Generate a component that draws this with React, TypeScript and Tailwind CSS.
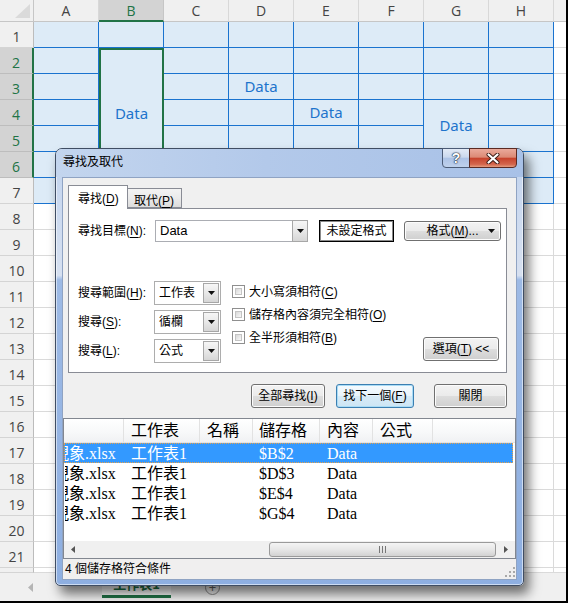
import React from "react";

const COLS = ["A", "B", "C", "D", "E", "F", "G", "H"];
const MERGED: Record<string, { span: number; text: string }> = {
  B2: { span: 5, text: "Data" },
  D3: { span: 1, text: "Data" },
  E4: { span: 1, text: "Data" },
  G4: { span: 2, text: "Data" },
};
const COVERED = new Set(["B3", "B4", "B5", "B6", "G5"]);

const ui = "font-['Liberation_Sans','Noto_Sans_CJK_TC',sans-serif]";

function U({ children }: { children: React.ReactNode }) {
  return <span className="underline underline-offset-[2px]">{children}</span>;
}

function Sheet() {
  const cells: React.ReactNode[] = [];
  cells.push(
    <div
      key="corner"
      className="flex items-end justify-end border-b border-r border-[#c6c6c6] bg-[#f0f0f0] pb-[3px] pr-[3px]"
    >
      <svg width="15" height="14" viewBox="0 0 15 14">
        <path d="M15 0V14H0Z" fill="#dadada" />
      </svg>
    </div>,
  );
  COLS.forEach((c) =>
    cells.push(
      <div
        key={c}
        className={
          c === "B"
            ? "flex items-center justify-center border-b-2 border-r border-b-[#217346] border-r-[#c6c6c6] bg-[#d3d3d3] text-[#217346]"
            : "flex items-center justify-center border-b border-r border-b-[#c6c6c6] border-r-[#d8d8d8] bg-[#f0f0f0] text-[#444]"
        }
      >
        {c}
      </div>,
    ),
  );
  cells.push(<div key="I" className="border-b border-[#c6c6c6] bg-[#f0f0f0]" />);

  for (let r = 1; r <= 22; r++) {
    const sel = r >= 2 && r <= 6;
    cells.push(
      <div
        key={`h${r}`}
        className={
          sel
            ? "flex items-center justify-center border-b border-r-2 border-b-[#bdbdbd] border-r-[#217346] bg-[#d3d3d3] pt-[3px] text-[#217346]"
            : "flex items-center justify-center border-b border-r border-b-[#d4d4d4] border-r-[#bcbcbc] bg-[#f0f0f0] pt-[3px] text-[#444]"
        }
      >
        {r <= 21 ? r : ""}
      </div>,
    );
    COLS.forEach((c) => {
      const id = `${c}${r}`;
      if (COVERED.has(id)) return;
      const m = MERGED[id];
      if (r <= 7) {
        const span = m?.span === 5 ? "row-span-5" : m?.span === 2 ? "row-span-2" : "";
        const selected = id === "B2";
        cells.push(
          <div
            key={id}
            className={`${span} flex items-center justify-center bg-[#ddebf7] font-['Noto_Sans',sans-serif] text-[15px] text-[#1d74cc] ${
              selected
                ? "border-2 border-[#217346]"
                : "border-b border-r border-[#1a73cf]"
            }`}
          >
            {m?.text}
          </div>,
        );
      } else {
        cells.push(<div key={id} className="border-b border-r border-[#dadada] bg-white" />);
      }
    });
    cells.push(<div key={`I${r}`} className="border-b border-[#dadada] bg-white" />);
  }

  return (
    <div className="grid grid-cols-[34px_repeat(8,65px)_1fr] grid-rows-[22px_repeat(21,26px)_5px] font-['Open_Sans',sans-serif] text-[14px]">
      {cells}
    </div>
  );
}

function SheetTabs() {
  return (
    <div className="flex h-[28px] items-start bg-[#f0f0f0]">
      <svg className="ml-[28px] mt-[10px]" width="5" height="9" viewBox="0 0 5 9">
        <path d="M5 0V9L0 4.5Z" fill="#b5b5b5" />
      </svg>
      <div className="ml-[69px] flex h-[25px] w-[69px] items-center justify-center border-b-[3px] border-[#217346] bg-white font-['Noto_Sans_CJK_TC',sans-serif] text-[13px] font-bold text-[#217346]">
        工作表1
      </div>
      <div className="ml-[34px] mt-[7px] flex h-[15px] w-[15px] items-center justify-center rounded-full border border-[#8a8a8a] text-[13px] leading-none text-[#666]">
        +
      </div>
    </div>
  );
}

function DropBtn({ className = "" }: { className?: string }) {
  return (
    <div
      className={`flex w-[16px] items-center justify-center border border-[#a7a7a7] bg-[linear-gradient(180deg,#f6f6f6_0%,#e8e8e8_50%,#d6d6d6_100%)] ${className}`}
    >
      <svg width="7" height="4" viewBox="0 0 7 4">
        <path d="M0 0H7L3.5 4Z" fill="#111" />
      </svg>
    </div>
  );
}

function Select({ value }: { value: string }) {
  return (
    <div className="flex h-[24px] w-[67px] border border-[#adadad] bg-white p-px">
      <span className="flex-1 pl-[3px] leading-[20px]">{value}</span>
      <DropBtn />
    </div>
  );
}

function Btn({
  children,
  className = "",
  def = false,
}: {
  children: React.ReactNode;
  className?: string;
  def?: boolean;
}) {
  return (
    <div
      className={`relative flex items-center justify-center rounded-[3px] border ${
        def
          ? "border-[#3c7fb1] bg-[linear-gradient(180deg,#f6fbfe_0%,#e9f4fb_48%,#d7ebf7_52%,#cde5f4_100%)] shadow-[inset_0_0_0_1px_#a9dcf6]"
          : "border-[#707070] bg-[linear-gradient(180deg,#f3f3f3_0%,#ebebeb_48%,#dddddd_52%,#cfcfcf_100%)] shadow-[inset_0_0_0_1px_#fcfcfc]"
      } ${className}`}
    >
      {children}
    </div>
  );
}

function Check({ children }: { children: React.ReactNode }) {
  return (
    <div className="flex h-[13px] items-center gap-[4px]">
      <div className="h-[13px] w-[13px] border border-[#8f8f8f] bg-white p-[2px]">
        <div className="h-full w-full border border-[#c4c4c4] bg-[linear-gradient(135deg,#d8d8d8,#f8f8f8)]" />
      </div>
      <span className="leading-none">{children}</span>
    </div>
  );
}

const RESULTS = ["$B$2", "$D$3", "$E$4", "$G$4"];

function ListView() {
  return (
    <div className="flex h-[141px] flex-col border border-[#828790] bg-white font-['Liberation_Serif','Noto_Sans_CJK_TC',serif] text-[16px] text-black">
      <div className="flex h-[24px] border-b border-[#e3e3e3] bg-[linear-gradient(180deg,#ffffff_0%,#f7f8f9_60%,#f0f1f3_100%)] leading-[23px]">
        <div className="w-[60px] border-r border-[#e2e2e2]" />
        <div className="w-[76px] border-r border-[#e2e2e2] pl-[7px]">工作表</div>
        <div className="w-[53px] border-r border-[#e2e2e2] pl-[7px]">名稱</div>
        <div className="w-[67px] border-r border-[#e2e2e2] pl-[6px]">儲存格</div>
        <div className="w-[53px] border-r border-[#e2e2e2] pl-[7px]">內容</div>
        <div className="w-[60px] border-r border-[#e2e2e2] pl-[7px]">公式</div>
        <div className="flex-1" />
      </div>
      {RESULTS.map((cell, i) => (
        <div
          key={cell}
          className={`mr-[2px] flex h-[20px] leading-[19px] ${
            i === 0 ? "border border-dotted border-[#e8a24a] bg-[#3399ff] text-white" : "border border-transparent"
          }`}
        >
          <div className="w-[59px] overflow-hidden whitespace-nowrap">
            <span className="-ml-[12px]">現象.xlsx</span>
          </div>
          <div className="w-[76px] pl-[7px]">工作表1</div>
          <div className="w-[53px]" />
          <div className="w-[67px] pl-[6px]">{cell}</div>
          <div className="w-[53px] pl-[7px]">Data</div>
        </div>
      ))}
      <div className="flex-1" />
      <div className="flex h-[17px] items-stretch bg-[#f0f0f0]">
        <div className="flex w-[17px] items-center justify-center">
          <svg width="4" height="7" viewBox="0 0 4 7">
            <path d="M4 0V7L0 3.5Z" fill="#555" />
          </svg>
        </div>
        <div className="flex-1" />
        <div className="my-px flex w-[227px] items-center justify-center gap-[2px] rounded-[3px] border border-[#9a9a9a] bg-[linear-gradient(180deg,#f4f4f4_0%,#e7e7e7_50%,#d2d2d2_100%)]">
          <div className="h-[7px] w-px bg-[#777]" />
          <div className="h-[7px] w-px bg-[#777]" />
          <div className="h-[7px] w-px bg-[#777]" />
        </div>
        <div className="flex w-[19px] items-center justify-center">
          <svg width="4" height="7" viewBox="0 0 4 7">
            <path d="M0 0V7L4 3.5Z" fill="#555" />
          </svg>
        </div>
      </div>
    </div>
  );
}

function Dialog() {
  return (
    <div
      className={`absolute left-[55px] top-[148px] flex h-[438px] w-[469px] flex-col rounded-b-[5px] rounded-t-[7px] border border-[#3f4d63] bg-[linear-gradient(180deg,#bcd0ec_0%,#c9d8ef_10%,#d6e0f0_29%,#9dbae5_30%,#8eafe1_100%)] shadow-[5px_8px_12px_rgba(0,0,0,0.55),inset_0_0_0_1px_rgba(255,255,255,0.55)] ${ui} text-[12px] text-black`}
    >
      <div className="flex h-[28px] items-start rounded-t-[6px] bg-[linear-gradient(90deg,#c3d5ee_0%,#b3c9ea_45%,#a8c1e7_100%)] pl-[7px] pr-[6px]">
        <span className="mt-[6px] leading-[14px]">尋找及取代</span>
        <div className="-mt-px ml-auto flex">
          <div className="flex h-[20px] w-[28px] items-center justify-center rounded-bl-[4px] border border-[#4b5b76] bg-[linear-gradient(180deg,#e2eaf6_0%,#cbd9ee_45%,#adc3e6_52%,#bfd1ec_100%)]">
            <span className="text-[14px] font-bold leading-none text-white [text-shadow:0_0_1px_#1d2a3d,0_0_1px_#1d2a3d,0_0_2px_#1d2a3d]">
              ?
            </span>
          </div>
          <div className="-ml-px flex h-[20px] w-[48px] items-center justify-center rounded-br-[4px] border border-[#5b2a22] bg-[linear-gradient(180deg,#eaaa9b_0%,#dc8a76_45%,#c7442d_52%,#d3654c_85%,#e49d80_100%)]">
            <svg width="14" height="11" viewBox="0 0 14 11">
              <path d="M2.5 1.5L11.5 9.5M11.5 1.5L2.5 9.5" stroke="#3a1a14" strokeWidth="4" strokeLinecap="round" />
              <path d="M2.5 1.5L11.5 9.5M11.5 1.5L2.5 9.5" stroke="#fff" strokeWidth="2.2" strokeLinecap="round" />
            </svg>
          </div>
        </div>
      </div>

      <div className="mx-[6px] flex flex-1 flex-col border border-[#8fa3c3] bg-[#f0f0f0]">
        <div className="ml-[5px] mt-[7px] flex h-[23px] items-end">
          <div className="relative z-10 -mb-px flex h-[24px] w-[60px] items-start border border-b-0 border-[#898c95] bg-white pl-[9px] pt-[4px]">
            尋找(<U>D</U>)
          </div>
          <div className="flex h-[20px] w-[54px] items-start border border-l-0 border-[#898c95] bg-[linear-gradient(180deg,#f3f3f3_0%,#ebebeb_50%,#dcdcdc_100%)] pl-[6px] pt-[3px]">
            取代(<U>P</U>)
          </div>
        </div>

        <div className="ml-[5px] mr-[9px] h-[165px] border border-[#898c95] bg-white">
          <div className="flex items-center pl-[9px] pt-[11px]">
            <span className="w-[77px]">
              尋找目標(<U>N</U>):
            </span>
            <div className="flex h-[22px] w-[153px] border border-[#abadb3] bg-white">
              <span className="flex-1 pl-[4px] text-[13px] leading-[20px]">Data</span>
              <DropBtn className="my-[-1px] mr-[-1px]" />
            </div>
            <div className="ml-[11px] flex h-[22px] w-[75px] items-center justify-center border border-black bg-white shadow-[inset_0_0_0_1px_#8a8a8a]">
              未設定格式
            </div>
            <Btn className="ml-[10px] h-[20px] w-[97px]">
              <span>
                格式(<U>M</U>)...
              </span>
              <svg className="absolute right-[5px] top-[7px]" width="7" height="4" viewBox="0 0 7 4">
                <path d="M0 0H7L3.5 4Z" fill="#111" />
              </svg>
            </Btn>
          </div>

          <div className="mt-[39px] flex pl-[9px] pr-[7px]">
            <div className="flex flex-col gap-[5px]">
              <div className="flex h-[24px] items-center">
                <span className="w-[76px]">
                  搜尋範圍(<U>H</U>):
                </span>
                <Select value="工作表" />
              </div>
              <div className="flex h-[24px] items-center">
                <span className="w-[76px]">
                  搜尋(<U>S</U>):
                </span>
                <Select value="循欄" />
              </div>
              <div className="flex h-[24px] items-center">
                <span className="w-[76px]">
                  搜尋(<U>L</U>):
                </span>
                <Select value="公式" />
              </div>
            </div>
            <div className="ml-[11px] flex flex-col gap-[10px] pt-[4px]">
              <Check>
                大小寫須相符(<U>C</U>)
              </Check>
              <Check>
                儲存格內容須完全相符(<U>O</U>)
              </Check>
              <Check>
                全半形須相符(<U>B</U>)
              </Check>
            </div>
            <Btn className="mb-[2px] ml-auto h-[24px] w-[76px] self-end">
              選項(<U>T</U>)&nbsp;&lt;&lt;
            </Btn>
          </div>
        </div>

        <div className="mr-[9px] mt-[11px] flex justify-end">
          <Btn className="h-[24px] w-[74px]">
            全部尋找(<U>I</U>)
          </Btn>
          <Btn def className="ml-[11px] h-[24px] w-[78px]">
            找下一個(<U>F</U>)
          </Btn>
          <Btn className="ml-[20px] h-[24px] w-[73px]">關閉</Btn>
        </div>

        <div className="mt-[10px]">
          <ListView />
        </div>

        <div className="flex h-[21px] flex-1 items-center justify-between bg-[#f0efef] pl-[2px] pr-[1px]">
          <span>4 個儲存格符合條件</span>
          <svg className="mb-[2px] self-end" width="10" height="10" viewBox="0 0 10 10">
            <g fill="#a9a9a9">
              <rect x="8" y="0" width="2" height="2" />
              <rect x="4" y="4" width="2" height="2" />
              <rect x="8" y="4" width="2" height="2" />
              <rect x="0" y="8" width="2" height="2" />
              <rect x="4" y="8" width="2" height="2" />
              <rect x="8" y="8" width="2" height="2" />
            </g>
          </svg>
        </div>
      </div>
      <div className="h-[5px]" />
    </div>
  );
}

export default function App() {
  return (
    <div className="relative h-[603px] w-[568px] overflow-hidden border-b-2 border-r-2 border-black bg-white">
      <Sheet />
      <SheetTabs />
      <Dialog />
    </div>
  );
}
